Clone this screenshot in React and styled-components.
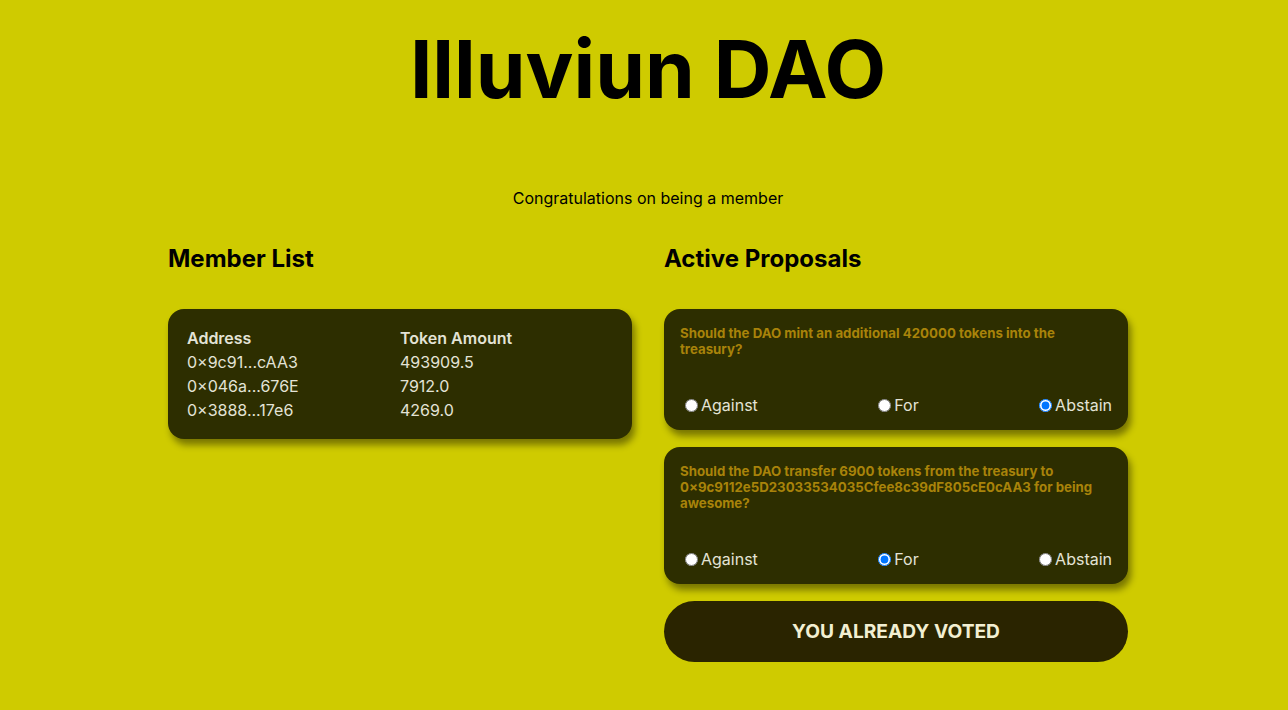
import React from 'react';
import styled, { createGlobalStyle } from 'styled-components';

const GlobalStyle = createGlobalStyle`
  body {
    margin: 0;
    background-color: #cfcb00;
    color: #000;
    font-family: 'Inter', 'Liberation Sans', sans-serif;
  }
  * {
    box-sizing: border-box;
  }
`;

const MemberPage = styled.div`
  width: 960px;
  margin: 0 auto;
  transform: translateX(4px);
  display: flex;
  flex-direction: column;
  text-align: center;
`;

const Title = styled.h1`
  font-size: 80px;
  font-weight: 700;
  line-height: 1.2;
  margin: 21px 0 0;
`;

const Subtitle = styled.p`
  font-size: 16px;
  margin: 72px 0 0;
  line-height: 1.2;
`;

const Columns = styled.div`
  display: flex;
  flex-direction: row;
  gap: 32px;
  text-align: left;
  margin-top: 37px;
`;

const Column = styled.div`
  display: flex;
  flex-direction: column;
  flex: 1 1 50%;
`;

const Heading = styled.h2`
  font-size: 24px;
  font-weight: 700;
  margin: 0 0 35px;
  line-height: 1.2;
`;

const Card = styled.div`
  background-color: #2d2e00;
  border-radius: 16px;
  box-shadow: 3px 6px 7px rgba(0, 0, 0, 0.42);
  color: #e3e3d6;
`;

const TableCard = styled(Card)`
  padding: 17px 19px 17px;
`;

const Table = styled.table`
  width: 100%;
  border-collapse: collapse;
  table-layout: fixed;
  font-size: 16px;

  th, td {
    text-align: left;
    padding: 0;
    height: 24px;
    width: 50%;
  }

  th {
    font-weight: 600;
  }
`;

const ProposalForm = styled.form`
  display: flex;
  flex-direction: column;
  gap: 17px;
`;

const ProposalCard = styled(Card)`
  padding: 16px 16px 15px;
`;

const Question = styled.h5`
  margin: 0;
  font-size: 13.28px;
  line-height: 16px;
  font-weight: 700;
  color: #a8830a;
`;

const Options = styled.div`
  display: flex;
  justify-content: space-between;
  align-items: center;
  margin-top: 39px;
  font-size: 16px;
  color: #e3e3d6;
`;

const Option = styled.label`
  display: flex;
  align-items: center;
  line-height: 19px;

  input {
    margin: 0 3px 0 5px;
    width: 13px;
    height: 13px;
  }
`;

const VoteButton = styled.button`
  height: 61px;
  border: none;
  border-radius: 31px;
  background-color: #2a2400;
  color: #f2efd2;
  font-family: inherit;
  font-size: 19.2px;
  font-weight: 700;
  text-transform: uppercase;
`;

const members = [
  { address: '0×9c91...cAA3', amount: '493909.5' },
  { address: '0×046a...676E', amount: '7912.0' },
  { address: '0×3888...17e6', amount: '4269.0' },
];

const proposals = [
  {
    id: 'p1',
    text: 'Should the DAO mint an additional 420000 tokens into the treasury?',
    vote: 'Abstain',
  },
  {
    id: 'p2',
    text: 'Should the DAO transfer 6900 tokens from the treasury to 0×9c9112e5D23033534035Cfee8c39dF805cE0cAA3 for being awesome?',
    vote: 'For',
  },
];

const choices = ['Against', 'For', 'Abstain'];

export default function App() {
  return (
    <>
      <GlobalStyle />
      <MemberPage>
        <Title>Illuviun DAO</Title>
        <Subtitle>Congratulations on being a member</Subtitle>
        <Columns>
          <Column>
            <Heading>Member List</Heading>
            <TableCard>
              <Table>
                <thead>
                  <tr>
                    <th>Address</th>
                    <th>Token Amount</th>
                  </tr>
                </thead>
                <tbody>
                  {members.map((m) => (
                    <tr key={m.address}>
                      <td>{m.address}</td>
                      <td>{m.amount}</td>
                    </tr>
                  ))}
                </tbody>
              </Table>
            </TableCard>
          </Column>
          <Column>
            <Heading>Active Proposals</Heading>
            <ProposalForm onSubmit={(e) => e.preventDefault()}>
              {proposals.map((p) => (
                <ProposalCard key={p.id}>
                  <Question>{p.text}</Question>
                  <Options>
                    {choices.map((c) => (
                      <Option key={c}>
                        <input
                          type="radio"
                          name={p.id}
                          value={c}
                          defaultChecked={p.vote === c}
                        />
                        {c}
                      </Option>
                    ))}
                  </Options>
                </ProposalCard>
              ))}
              <VoteButton type="submit" disabled>
                You already voted
              </VoteButton>
            </ProposalForm>
          </Column>
        </Columns>
      </MemberPage>
    </>
  );
}
